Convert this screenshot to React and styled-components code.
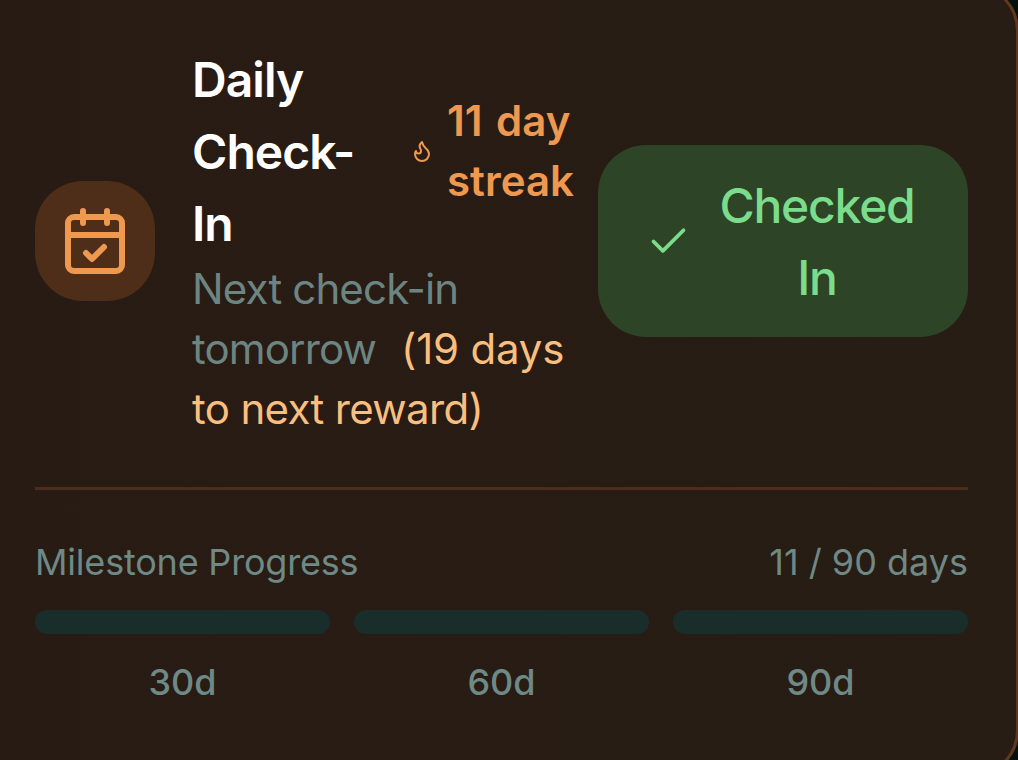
import styled, { createGlobalStyle } from 'styled-components';

const milestones = ['30d', '60d', '90d'];

export default function App(){
    return(
        <>
            <GlobalStyle/>
            <Screen>
                <Card>
                    <CheckInRow>
                        <IconTile>
                            <StrokeIcon $size={72} viewBox='0 0 24 24'>
                                <path d='M8 2v4'/>
                                <path d='M16 2v4'/>
                                <rect width='18' height='18' x='3' y='4' rx='2'/>
                                <path d='M3 10h18'/>
                                <path d='m9 16 2 2 4-4'/>
                            </StrokeIcon>
                        </IconTile>
                        <Info>
                            <TitleRow>
                                <Title>Daily Check-In</Title>
                                <Streak>
                                    <StrokeIcon $size={24} viewBox='0 0 24 24'>
                                        <path d='M8.5 14.5A2.5 2.5 0 0 0 11 12c0-1.38-.5-2-1-3-1.072-2.143-.224-4.054 2-6 .5 2.5 2 4.9 4 6.5 2 1.6 3 3.5 3 5.5a7 7 0 1 1-14 0c0-1.153.433-2.294 1-3a2.5 2.5 0 0 0 2.5 2.5z'/>
                                    </StrokeIcon>
                                    <StreakText>11 day streak</StreakText>
                                </Streak>
                            </TitleRow>
                            <NextText>
                                Next check-in tomorrow <Reward><Days>(19 days</Days> to next reward)</Reward>
                            </NextText>
                        </Info>
                        <CheckedButton>
                            <StrokeIcon $size={45} viewBox='0 0 24 24'>
                                <path d='M20 6 9 17l-5-5'/>
                            </StrokeIcon>
                            <span>Checked In</span>
                        </CheckedButton>
                    </CheckInRow>
                    <Progress>
                        <ProgressHeader>
                            <ProgressTitle>Milestone Progress</ProgressTitle>
                            <span>11 / 90 days</span>
                        </ProgressHeader>
                        <Milestones>
                            {milestones.map((label)=>(
                                <Milestone key={label}>
                                    <Bar/>
                                    <MilestoneLabel>{label}</MilestoneLabel>
                                </Milestone>
                            ))}
                        </Milestones>
                    </Progress>
                </Card>
            </Screen>
        </>
    )
}

const GlobalStyle=createGlobalStyle`
    *{
        box-sizing: border-box;
    }
    body{
        margin: 0;
        background: #03120f;
        font-family: Inter, "Liberation Sans", sans-serif;
        overflow: hidden;
    }
    p, h3{
        margin: 0;
    }
`

const Screen=styled.div`
    width: 1018px;
    height: 760px;
    overflow: hidden;
`

const Card=styled.section`
    width: 1035px;
    height: 795px;
    margin: -17px 0 0 -16px;
    padding: 57px 48px 48px;
    border: 3px solid #60371d;
    border-radius: 48px;
    background: linear-gradient(90deg, #281b14, #271d14);
`

const StrokeIcon=styled.svg`
    width: ${({$size})=>$size}px;
    height: ${({$size})=>$size}px;
    flex: none;
    fill: none;
    stroke: currentColor;
    stroke-width: 2;
    stroke-linecap: round;
    stroke-linejoin: round;
`

const CheckInRow=styled.div`
    display: flex;
    align-items: center;
    height: 396px;
`

const IconTile=styled.div`
    width: 120px;
    height: 120px;
    flex: none;
    display: flex;
    align-items: center;
    justify-content: center;
    border-radius: 48px;
    background: #4e2e19;
    color: #ef9850;
`

const Info=styled.div`
    width: 382px;
    flex: none;
    margin-left: 37px;
`

const TitleRow=styled.div`
    display: flex;
    align-items: center;
    justify-content: space-between;
`

const Title=styled.h3`
    width: 194px;
    padding-top: 1px;
    margin-bottom: -1px;
    font-size: 48px;
    line-height: 72px;
    font-weight: 600;
    letter-spacing: -0.95px;
    color: #fff;
`

const Streak=styled.div`
    display: flex;
    align-items: center;
    gap: 13px;
    color: #ef9850;
`

const StreakText=styled.span`
    width: 127px;
    font-size: 42px;
    line-height: 60px;
    font-weight: 600;
    word-spacing: 3px;
`

const NextText=styled.p`
    font-size: 42px;
    line-height: 60px;
    letter-spacing: -0.85px;
    color: #6c8582;
`

const Reward=styled.span`
    margin-left: 14px;
    letter-spacing: -0.65px;
    color: #fabf7f;
`

const Days=styled.span`
    letter-spacing: -0.2px;
`

const CheckedButton=styled.div`
    width: 370px;
    height: 192px;
    flex: none;
    margin-left: 24px;
    padding: 24px 48px;
    display: flex;
    align-items: center;
    gap: 24px;
    border-radius: 48px;
    background: #2d4426;
    color: #7bdc8c;
    font-size: 48px;
    line-height: 72px;
    font-weight: 500;
    letter-spacing: -1.2px;
    text-align: center;
    span{
        flex: 1;
        margin-left: -1px;
        padding-top: 2px;
    }
`

const Progress=styled.div`
    margin-top: 48px;
    padding-top: 48px;
    border-top: 3px solid #4c2d1a;
    color: #6f8986;
    font-size: 36px;
    line-height: 48px;
`

const ProgressHeader=styled.div`
    display: flex;
    justify-content: space-between;
`

const ProgressTitle=styled.span`
    letter-spacing: -0.2px;
`

const Milestones=styled.div`
    display: grid;
    grid-template-columns: repeat(3,1fr);
    gap: 24px;
    margin-top: 24px;
`

const Milestone=styled.div`
    display: flex;
    flex-direction: column;
    gap: 24px;
`

const Bar=styled.div`
    height: 24px;
    border-radius: 12px;
    background: #192e2a;
`

const MilestoneLabel=styled.span`
    font-weight: 500;
    text-align: center;
`
